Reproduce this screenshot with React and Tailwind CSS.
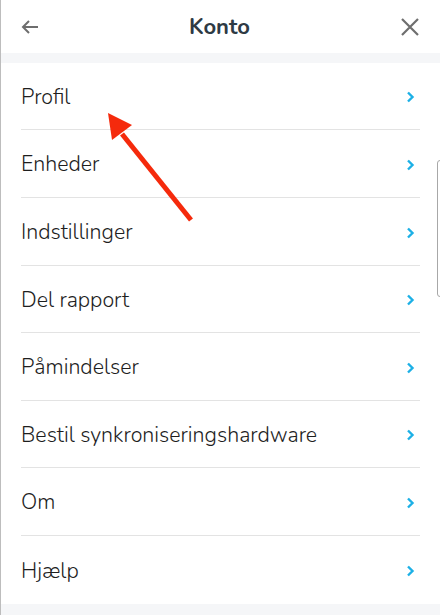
import React from "react";

const items = [
  ["Profil", "h-[67px]"],
  ["Enheder", "h-[68px]"],
  ["Indstillinger", "h-[68px]"],
  ["Del rapport", "h-[67px]"],
  ["Påmindelser", "h-[68px]"],
  ["Bestil synkroniseringshardware", "h-[67px]"],
  ["Om", "h-[68px]"],
  ["Hjælp", "h-[68px]"],
];

function Chevron() {
  return (
    <svg width="10" height="14" viewBox="0 0 10 14" fill="none">
      <path d="M3 2.5 L7.5 7 L3 11.5" stroke="#1cb0e6" strokeWidth="2.4" strokeLinecap="butt" strokeLinejoin="miter" />
    </svg>
  );
}

export default function App() {
  return (
    <div
      className="relative w-[440px] h-[615px] overflow-hidden bg-[#f5f6f8] border-l border-[#bdbdbd]"
      style={{ fontFamily: "Nunito, 'Noto Sans', 'Open Sans', sans-serif" }}
    >
      <div className="h-[53px] bg-white flex items-center justify-between px-[19px]">
        <svg width="20" height="16" viewBox="0 0 20 16" fill="none">
          <path d="M18 8 H3 M9 2 L3 8 L9 14" stroke="#6e6e6e" strokeWidth="2" />
        </svg>
        <div className="text-[22px] font-bold text-[#2e3a44] leading-none">Konto</div>
        <svg width="22" height="22" viewBox="0 0 22 22" fill="none">
          <path d="M3 3 L19 19 M19 3 L3 19" stroke="#6e6e6e" strokeWidth="2.2" />
        </svg>
      </div>
      <div className="h-[10px]" />
      <div className="bg-white">
        {items.map(([t, h], i) => (
          <div key={t} className={"mx-[20px] flex items-center justify-between pt-[2px] " + h + (i < items.length - 1 ? " border-b border-[#e3e3e3]" : "")}>
            <span className="text-[21.4px] font-light text-[#1e1e1e]">{t}</span>
            <span className="mr-[5px]"><Chevron /></span>
          </div>
        ))}
      </div>
      <div className="absolute left-[436px] top-[160px] w-[10px] h-[137px] border border-[#a8a8a8] rounded-[3px] bg-white" />
      <svg className="absolute left-0 top-0 pointer-events-none" width="440" height="615" viewBox="0 0 440 615">
        <path d="M190 220 L121 134" stroke="#f52a0c" strokeWidth="5" />
        <polygon points="107,113 131,125 111,140" fill="#f52a0c" />
      </svg>
    </div>
  );
}
